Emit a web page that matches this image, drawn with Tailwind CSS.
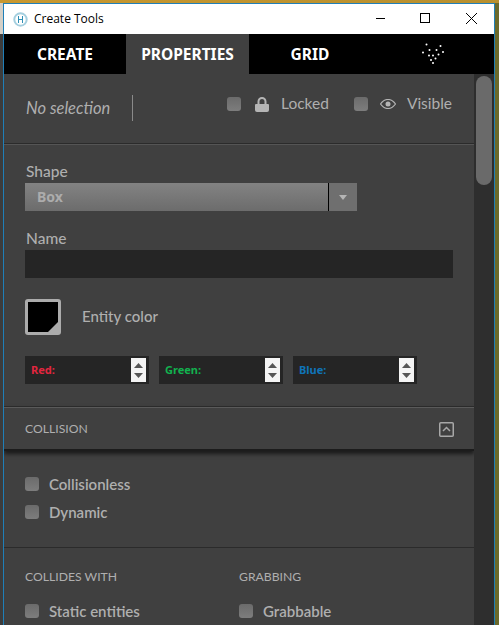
<!DOCTYPE html>
<html lang="en">

<head>
    <meta charset="utf-8" />
    <meta content="width=device-width, initial-scale=1.0" name="viewport" />
    <title>Create Tools</title>
    <script src="https://cdn.jsdelivr.net/npm/@tailwindcss/browser@4"></script>
</head>

<body class="bg-[#6b6a2c] font-['Lato',sans-serif] text-[#afafaf]">
    <div class="h-[625px] w-[499px] overflow-hidden">
        <!-- Desktop behind the window -->
        <div class="h-[3px] bg-gradient-to-r from-[#c9982f] to-[#b8902f]"></div>

        <div class="flex h-[622px]">
            <div class="w-[3px] bg-[#3c3c3c]">
                <div class="h-[31px] bg-[#d4d0c8]"></div>
            </div>

            <div class="h-[622px] w-[492px] overflow-hidden border-t border-x border-[#1f7fb8] bg-[#404040]">

                <!-- Title bar -->
                <header class="flex h-[30px] items-center bg-white text-black">
                    <svg class="ml-[9px] mr-[6px]" width="15" height="15" viewBox="0 0 15 15" fill="none">
                        <circle cx="7.5" cy="7.5" r="6.200" stroke="#a5cfdf" stroke-width="2" />
                        <path d="M5.500 4v7M9.500 4v7M5.500 7.500h4" stroke="#2f8fb5" stroke-width="1" />
                    </svg>
                    <span class="font-['Open_Sans',sans-serif] text-xs">Create Tools</span>
                    <svg class="ml-auto" width="118" height="30" viewBox="0 0 118 30" fill="none" stroke="#000" stroke-width="1">
                        <path d="M-1 14.500H9" />
                        <rect x="44.500" y="9.500" width="9" height="9" />
                        <path d="M90 9l11 11M101 9L90 20" />
                    </svg>
                </header>

                <!-- Tabs -->
                <nav class="grid h-10 grid-cols-[122px_123px_122px_1fr] items-center bg-black font-['Noto_Sans',sans-serif] text-[15.500px] font-bold text-white">
                    <a class="flex h-full items-center justify-center pt-px">CREATE</a>
                    <a class="flex h-full items-center justify-center bg-[#404040] pt-px">PROPERTIES</a>
                    <a class="flex h-full items-center justify-center pt-px">GRID</a>
                    <div class="flex items-center justify-center">
                        <svg width="24" height="24" viewBox="0 0 24 24" fill="#fff">
                            <circle cx="5.500" cy="2.500" r="1" /><circle cx="19.500" cy="4" r="1" />
                            <circle cx="8.500" cy="8" r="1" /><circle cx="15.500" cy="8" r="1" />
                            <circle cx="2" cy="10.500" r="1" /><circle cx="22" cy="10" r="1" />
                            <circle cx="17.500" cy="12.500" r="1" /><circle cx="12" cy="13.500" r="1" />
                            <circle cx="8" cy="13.500" r="1" /><circle cx="14.500" cy="16.500" r="1" />
                            <circle cx="10" cy="18" r="1" /><circle cx="12" cy="21" r="1" />
                        </svg>
                    </div>
                </nav>

                <div class="flex h-[551px]">
                    <main class="w-[470px] shrink-0 overflow-hidden">

                        <!-- Selection -->
                        <section class="flex h-[70px] border-b border-[#2b2b2b] pl-[22px]">
                            <div class="mt-[21px] flex h-[26px] w-[107px] items-center border-r border-[#8a8a8a] text-[16.500px] italic">No selection</div>
                            <div class="ml-[94px] mt-[20px] flex h-[20px] items-center text-[15.500px]">
                                <span class="size-[14px] rounded-[3px] bg-gradient-to-b from-[#6b6b6b] to-[#7d7d7d]"></span>
                                <svg class="ml-[14px]" width="14" height="15" viewBox="0 0 14 15" fill="#b5b5b5">
                                    <path d="M1 7h12a1 1 0 0 1 1 1v5a2 2 0 0 1-2 2H2a2 2 0 0 1-2-2V8a1 1 0 0 1 1-1z" />
                                    <path d="M3.500 7V4.500a3.500 3.500 0 0 1 7 0V7" fill="none" stroke="#b5b5b5" stroke-width="2" />
                                </svg>
                                <span class="ml-[12px]">Locked</span>
                                <span class="ml-[25px] size-[14px] rounded-[3px] bg-gradient-to-b from-[#6b6b6b] to-[#7d7d7d]"></span>
                                <svg class="ml-[12px]" width="16" height="10" viewBox="0 0 16 10" fill="none">
                                    <path d="M.5 5C3 1.500 5.500.5 8 .5s5 1 7.500 4.500C13 8.500 10.500 9.500 8 9.500S3 8.500.5 5z" stroke="#b5b5b5" stroke-width="1.200" />
                                    <circle cx="8" cy="5" r="2.500" fill="#b5b5b5" />
                                </svg>
                                <span class="ml-[11px]">Visible</span>
                            </div>
                        </section>

                        <!-- Properties -->
                        <section class="border-t border-[#555555] pl-[21px] pt-[19px]">
                            <label class="block h-[19px] pl-px text-[15.500px] font-medium leading-[14px]">Shape</label>
                            <div class="flex h-7 w-[332px] bg-gradient-to-b from-[#838383] to-[#6c6c6c] font-['Noto_Sans',sans-serif] text-sm font-bold text-[#acacac]">
                                <span class="flex w-[304px] items-center border-r border-black pl-3">Box</span>
                                <span class="flex flex-1 items-center justify-center bg-[#6f6f6f]">
                                    <svg width="8" height="5" viewBox="0 0 8 5" fill="#b5b5b5"><path d="M0 0h8L4 5z" /></svg>
                                </span>
                            </div>
                            <label class="mt-[19px] block h-5 pl-px text-[15.500px] font-medium leading-[16px]">Name</label>
                            <div class="h-7 w-[428px] bg-[#252525]"></div>

                            <div class="mt-[21px] flex items-center">
                                <div class="relative size-9 overflow-hidden rounded-[3px] border-[3px] border-[#acacac] bg-black">
                                    <svg class="absolute right-[-1px] bottom-[-1px]" width="12" height="12" viewBox="0 0 12 12" fill="#acacac"><path d="M12 0v12H0z" /></svg>
                                </div>
                                <span class="mb-[2px] ml-[21px] text-[15px] font-medium">Entity color</span>
                            </div>

                            <div class="mt-[21px] flex gap-[10px] font-['Noto_Sans',sans-serif] text-[11px] font-bold">
                                <div class="flex h-7 w-[124px] items-center justify-between bg-[#252525] pl-[6px] pr-[3px] text-[#e2263f]">
                                    <span>Red:</span>
                                    <span class="flex h-6 w-[15px] flex-col items-center justify-center gap-[5px] bg-[#f4f4f4]">
                                        <svg width="9" height="5" viewBox="0 0 9 5" fill="#555"><path d="M0 5h9L4.500 0z" /></svg>
                                        <svg width="9" height="5" viewBox="0 0 9 5" fill="#555"><path d="M0 0h9L4.500 5z" /></svg>
                                    </span>
                                </div>
                                <div class="flex h-7 w-[124px] items-center justify-between bg-[#252525] pl-[6px] pr-[3px] text-[#12b24f]">
                                    <span>Green:</span>
                                    <span class="flex h-6 w-[15px] flex-col items-center justify-center gap-[5px] bg-[#f4f4f4]">
                                        <svg width="9" height="5" viewBox="0 0 9 5" fill="#555"><path d="M0 5h9L4.500 0z" /></svg>
                                        <svg width="9" height="5" viewBox="0 0 9 5" fill="#555"><path d="M0 0h9L4.500 5z" /></svg>
                                    </span>
                                </div>
                                <div class="flex h-7 w-[124px] items-center justify-between bg-[#252525] pl-[6px] pr-[3px] text-[#0f74b8]">
                                    <span>Blue:</span>
                                    <span class="flex h-6 w-[15px] flex-col items-center justify-center gap-[5px] bg-[#f4f4f4]">
                                        <svg width="9" height="5" viewBox="0 0 9 5" fill="#555"><path d="M0 5h9L4.500 0z" /></svg>
                                        <svg width="9" height="5" viewBox="0 0 9 5" fill="#555"><path d="M0 0h9L4.500 5z" /></svg>
                                    </span>
                                </div>
                            </div>
                        </section>

                        <!-- Collision -->
                        <section class="mt-[22px] flex h-[45px] items-center justify-between border-t border-b-2 border-t-[#2b2b2b] border-b-[#1c1c1c] pl-[21px] pr-5 pt-[2px] text-[12.200px] shadow-[inset_0_1px_0_#5a5a5a,0_3px_4px_rgba(0,0,0,0.6)]">
                            <span>COLLISION</span>
                            <svg width="15" height="15" viewBox="0 0 15 15" fill="none" stroke="#a8a8a8" stroke-width="1.500">
                                <rect x=".75" y=".75" width="13.500" height="13.500" rx="1" />
                                <path d="M4 9l3.500-3.500L11 9" />
                            </svg>
                        </section>

                        <section class="h-[97px] border-b border-[#2b2b2b] pl-[21px] pt-[26px] text-[15px] font-semibold">
                            <div class="flex h-[14px] items-center">
                                <span class="size-[14px] rounded-[3px] bg-gradient-to-b from-[#6b6b6b] to-[#7d7d7d]"></span>
                                <span class="ml-[10px]">Collisionless</span>
                            </div>
                            <div class="mt-[14px] flex h-[14px] items-center">
                                <span class="size-[14px] rounded-[3px] bg-gradient-to-b from-[#6b6b6b] to-[#7d7d7d]"></span>
                                <span class="ml-[10px]">Dynamic</span>
                            </div>
                        </section>

                        <section class="grid grid-cols-[214px_1fr] pl-[21px] pt-[21px]">
                            <div>
                                <div class="text-[12.200px] leading-4">COLLIDES WITH</div>
                                <div class="mt-[19px] flex h-[14px] items-center text-[15px] font-semibold">
                                    <span class="size-[14px] rounded-[3px] bg-gradient-to-b from-[#6b6b6b] to-[#7d7d7d]"></span>
                                    <span class="ml-[10px]">Static entities</span>
                                </div>
                            </div>
                            <div>
                                <div class="text-[12.200px] leading-4">GRABBING</div>
                                <div class="mt-[19px] flex h-[14px] items-center text-[15px] font-semibold">
                                    <span class="size-[14px] rounded-[3px] bg-gradient-to-b from-[#6b6b6b] to-[#7d7d7d]"></span>
                                    <span class="ml-[10px]">Grabbable</span>
                                </div>
                            </div>
                        </section>
                    </main>

                    <!-- Scrollbar -->
                    <aside class="flex-1 bg-[#2e2e2e] pt-[2px]">
                        <div class="ml-[2px] h-[109px] w-4 rounded-lg bg-[#6a6a6a]"></div>
                    </aside>
                </div>
            </div>
        </div>
    </div>
</body>

</html>
